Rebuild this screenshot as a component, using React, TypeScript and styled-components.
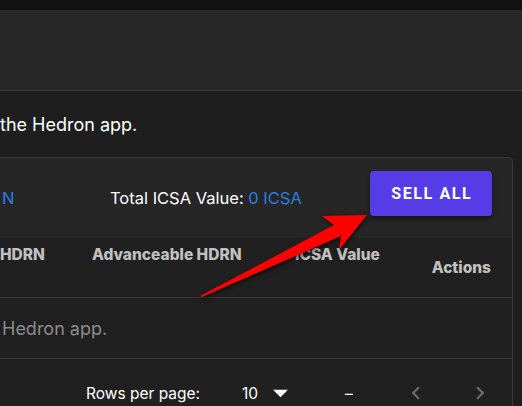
import React from "react";
import styled, { createGlobalStyle } from "styled-components";

const GlobalStyle = createGlobalStyle`
  html, body { margin: 0; padding: 0; background: #1e1e1e; }
  body { font-family: "Inter", "Noto Sans", sans-serif; color: #ffffff; }
  * { box-sizing: border-box; }
`;

const Viewport = styled.div`
  position: relative;
  width: 522px;
  height: 406px;
  overflow: hidden;
  background: #1e1e1e;
`;

const TopStrip = styled.div`
  height: 10px;
  background: #121212;
`;

const AppBar = styled.header`
  height: 81px;
  background: #272727;
  border-bottom: 1px solid #3b3b3b;
`;

const Intro = styled.p`
  margin: 0;
  padding: 22px 0 0 0;
  height: 66px;
  font-size: 18px;
  line-height: 24px;
  color: #ffffff;
`;

const Card = styled.section`
  margin: 0 9px 0 -1px;
  border: 1px solid #383838;
  border-radius: 0 4px 0 0;
  background: #202020;
`;

const Summary = styled.div`
  height: 80px;
  display: grid;
  grid-template-columns: 110px 260px 122px;
  align-items: center;
  background: #262626;
  border-radius: 0 4px 0 0;
`;

const SummaryText = styled.span<{ $pad?: number }>`
  padding-left: ${(p) => p.$pad ?? 0}px;
  font-size: 16.5px;
  color: #ffffff;
  white-space: nowrap;
`;

const Accent = styled.span`
  color: #2b7ee2;
`;

const SellButton = styled.button`
  align-self: start;
  margin-top: 13px;
  height: 45px;
  width: 122px;
  border: none;
  border-radius: 4px;
  background: #553ce6;
  color: #ffffff;
  font-family: "Roboto", "Liberation Sans", sans-serif;
  font-weight: 700;
  font-size: 16px;
  letter-spacing: 1.6px;
  text-indent: 1.6px;
  box-shadow: 0 3px 4px rgba(0, 0, 0, 0.45);
`;

const TableGrid = styled.div`
  display: grid;
  grid-template-columns: 76px 203px 138px 1fr;
`;

const HeadCell = styled.div<{ $pad?: number; $right?: boolean; $center?: boolean }>`
  height: 60px;
  border-bottom: 1px solid #383838;
  display: flex;
  align-items: ${(p) => (p.$center ? "center" : "flex-start")};
  justify-content: ${(p) => (p.$right ? "flex-end" : "flex-start")};
  padding: ${(p) => (p.$center ? "0" : "7px")} ${(p) => (p.$right ? 21 : 0)}px 0 ${(p) => p.$pad ?? 0}px;
  font-weight: 800;
  font-size: 15.5px;
  line-height: 20px;
  color: #c0c0c0;
  white-space: nowrap;
  overflow: hidden;
`;

const BodyCell = styled.div`
  grid-column: 1 / -1;
  height: 61px;
  border-bottom: 1px solid #383838;
  display: flex;
  align-items: center;
  padding-left: 2px;
  font-size: 18px;
  color: #8c8c8c;
`;

const Footer = styled.div`
  height: 48px;
  display: grid;
  grid-template-columns: 156px 103px 55px 64px 1fr;
  align-items: center;
  padding: 20px 0 0 86px;
  font-size: 15.5px;
  color: #ffffff;
`;

const SelectBox = styled.div`
  display: flex;
  align-items: center;
  gap: 9px;
`;

const Dash = styled.span`
  color: #ffffff;
`;

const NavButton = styled.span`
  width: 32px;
  display: flex;
  justify-content: center;
  color: #6a6a6a;
`;

const ArrowLayer = styled.svg`
  position: absolute;
  left: 0;
  top: 0;
  pointer-events: none;
  filter: drop-shadow(1px 2px 2px rgba(0, 0, 0, 0.6));
`;

export default function App() {
  return (
    <>
      <GlobalStyle />
      <Viewport>
        <TopStrip />
        <AppBar />
        <Intro>the Hedron app.</Intro>
        <Card>
          <Summary>
            <SummaryText $pad={2}>
              <Accent>N</Accent>
            </SummaryText>
            <SummaryText>
              Total ICSA Value: <Accent>0 ICSA</Accent>
            </SummaryText>
            <SellButton>SELL ALL</SellButton>
          </Summary>
          <TableGrid>
            <HeadCell $pad={0}>HDRN</HeadCell>
            <HeadCell $pad={16}>Advanceable HDRN</HeadCell>
            <HeadCell $pad={16}>ICSA Value</HeadCell>
            <HeadCell $right $center>Actions</HeadCell>
            <BodyCell>Hedron app.</BodyCell>
          </TableGrid>
          <Footer>
            <span>Rows per page:</span>
            <SelectBox>
              <span>10</span>
              <svg width="27" height="27" viewBox="3 5 18 15" fill="#ffffff">
                <path d="M7 10l5 5 5-5z" />
              </svg>
            </SelectBox>
            <Dash>–</Dash>
            <NavButton>
              <svg width="26" height="26" viewBox="0 0 24 24" fill="currentColor">
                <path d="M15.41 7.41 14 6l-6 6 6 6 1.41-1.41L10.83 12z" />
              </svg>
            </NavButton>
            <NavButton>
              <svg width="26" height="26" viewBox="0 0 24 24" fill="currentColor">
                <path d="M10 6 8.59 7.41 13.17 12l-4.58 4.59L10 18l6-6z" />
              </svg>
            </NavButton>
          </Footer>
        </Card>
        <ArrowLayer width="522" height="406" viewBox="0 0 522 406">
          <polygon
            points="200,296 334,225 322,216 367,215 339,250 341,236 202,297"
            fill="#ff0000"
          />
        </ArrowLayer>
      </Viewport>
    </>
  );
}
